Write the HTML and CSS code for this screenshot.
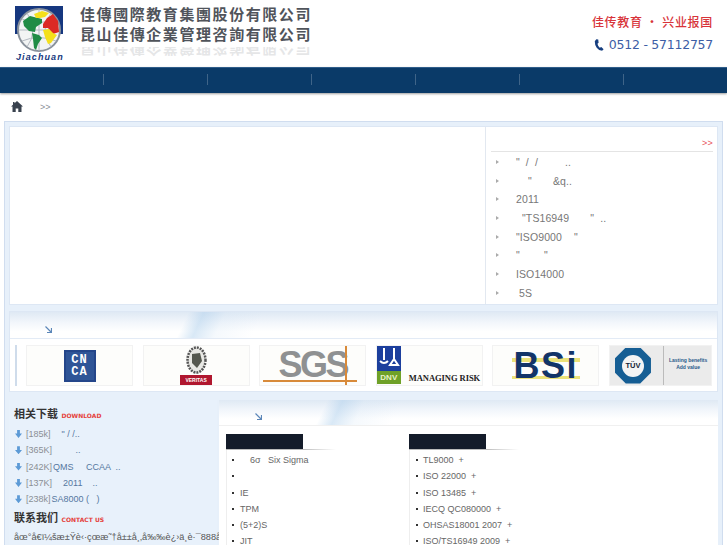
FILE: index.html
```html
<!DOCTYPE html>
<html lang="zh">
<head>
<meta charset="utf-8">
<title>佳傳國際教育集團</title>
<link rel="stylesheet" href="styles.css">
</head>
<body>
<header class="top">
  <svg class="logo" width="50" height="56" viewBox="0 0 50 56">
    <path d="M0 0H48V28H44A20 20 0 0 0 4 28H0Z" fill="#16377f"/>
    <circle cx="24" cy="24" r="21" fill="#f2f4f4" stroke="#8a929c" stroke-width="2"/>
    <path d="M4 24H44M24 3V45M12 7Q24 24 12 41M36 7Q24 24 36 41M7 13Q24 20 41 13M7 35Q24 28 41 35" fill="none" stroke="#b4bac2" stroke-width="1"/>
    <path d="M8 15L15 10L27 13L27 17L21 21L20 26L14 25L9 20Z" fill="#1f8c45"/>
    <path d="M19 8L27 5L34 7L30 11L25 12L21 12Z" fill="#f5e01c"/>
    <path d="M28 18L32 12L38 8L43 15L44 26L38 28L33 22L28 22Z" fill="#dc2a24"/>
    <path d="M28 24L34 23L38 27L42 29L36 37L33 38L30 31Z" fill="#f5e01c"/>
    <path d="M17 27L24 29L27 32L23 38L21 44L19 42L18 33Z" fill="#1f8c45"/>
    <text x="1" y="53.500" class="logo-word">Jiachuan</text>
  </svg>
  <div class="brand">
    <div class="brand-line">佳傳國際教育集團股份有限公司</div>
    <div class="brand-line">昆山佳傳企業管理咨詢有限公司</div>
    <div class="brand-mirror"><div class="brand-line">昆山佳傳企業管理咨詢有限公司</div></div>
  </div>
  <div class="contact">
    <div class="slogan">佳传教育 • 兴业报国</div>
    <div class="phone">
      <svg width="10" height="16" viewBox="0 0 13 16"><path d="M3 0.500L5.500 1L6 5L4.500 6.500Q5 9.500 7.500 11.500L9.500 10.500L12.500 13.500L10.500 15.500Q6.500 15.500 3.500 11.500Q1 8 1 3Z" fill="#173f80"/></svg>
      <span>0512 - 57112757</span>
    </div>
  </div>
</header>

<nav class="nav">
  <span class="nav-item"></span><span class="nav-item"></span><span class="nav-item"></span><span class="nav-item"></span><span class="nav-item"></span><span class="nav-item"></span>
</nav>

<div class="crumb">
  <svg width="12" height="11" viewBox="0 0 12 11"><path d="M6 0L12 5.500H10.500V11H7.300V7.500H4.700V11H1.500V5.500H0L2 3.700V1H3.500V2.300Z" fill="#39424e"/></svg>
  <span class="crumb-sep">&gt;&gt;</span>
</div>

<main class="shell">
  <section class="hero">
    <div class="hero-left"></div>
    <aside class="news">
      <div class="news-head"><span class="more">&gt;&gt;</span></div>
      <ul class="news-list">
        <li>"  /  /         ..</li>
        <li>    "       &amp;q..</li>
        <li>2011</li>
        <li>  "TS16949       "  ..</li>
        <li>"ISO9000    "</li>
        <li>"        "</li>
        <li>ISO14000</li>
        <li> 5S</li>
      </ul>
    </aside>
  </section>

  <section class="partners">
    <div class="band band-a"><svg class="band-arrow" width="7" height="7" viewBox="0 0 7 7"><path d="M0.500 0.500L6 6M6.500 2V6.500H2" fill="none" stroke="#5b86b8" stroke-width="1.200"/></svg></div>
    <div class="logos">
      <div class="cert">
        <div class="cnca"><span>CN</span><span>CA</span></div>
      </div>
      <div class="cert">
        <div class="bv">
          <svg width="21" height="28" viewBox="0 0 21 28"><ellipse cx="10.500" cy="14" rx="9" ry="12.500" fill="#e8e8e4" stroke="#555" stroke-width="2.500" stroke-dasharray="2 1"/><path d="M6 8L14 7L16 15L11 22L6 17Z" fill="#55584f"/></svg>
          <div class="bv-tag">VERITAS</div>
        </div>
      </div>
      <div class="cert sgs-box">
        <span class="sgs">SGS</span>
        <i class="sgs-h"></i><i class="sgs-v"></i>
      </div>
      <div class="cert dnv-box">
        <div class="dnv">
          <svg class="dnv-top" width="24" height="26" viewBox="0 0 24 26"><rect width="24" height="26" fill="#1c3f9d"/><path d="M7 3V15M3 16Q7 20 11 16M17 3V14L21 20H13L17 14" fill="none" stroke="#fff" stroke-width="2"/></svg>
          <div class="dnv-green">DNV</div>
        </div>
        <span class="risk">MANAGING RISK</span>
      </div>
      <div class="cert">
        <div class="bsi">BSi</div>
      </div>
      <div class="cert tuv-box">
        <div class="tuv"><span>TÜV</span></div>
        <div class="tuv-note">Lasting benefits<br>Add value</div>
      </div>
    </div>
  </section>

  <section class="lower">
    <aside class="side">
      <h3 class="side-title">相关下载 <span class="side-en">DOWNLOAD</span></h3>
      <ul class="files">
        <li><i class="dl"></i><span class="size">[185k]</span>    " / /..</li>
        <li><i class="dl"></i><span class="size">[365K]</span>         ..</li>
        <li><i class="dl"></i><span class="size">[242K]</span>QMS     CCAA  ..</li>
        <li><i class="dl"></i><span class="size">[137K]</span>    2011    ..</li>
        <li><i class="dl"></i><span class="size">[238k]</span>SA8000 (   )</li>
      </ul>
      <h3 class="side-title">联系我们 <span class="side-en">CONTACT US</span></h3>
      <p class="addr">åœ°å€ï¼šæ±Ÿè‹·çœæ˜†å±±å¸‚å‰‰è¿›ä¸­è·¯888å</p>
    </aside>
    <div class="courses">
      <div class="band band-b"><svg class="band-arrow" width="7" height="7" viewBox="0 0 7 7"><path d="M0.500 0.500L6 6M6.500 2V6.500H2" fill="none" stroke="#5b86b8" stroke-width="1.200"/></svg></div>
      <div class="course-cols">
        <div class="col">
          <div class="tab"></div>
          <ul class="course-list">
            <li>    6σ   Six Sigma</li>
            <li>&nbsp;</li>
            <li>IE</li>
            <li>TPM</li>
            <li>(5+2)S</li>
            <li>JIT</li>
          </ul>
        </div>
        <div class="col col-tight">
          <div class="tab"></div>
          <ul class="course-list">
            <li>TL9000  +</li>
            <li>ISO 22000  +</li>
            <li>ISO 13485  +</li>
            <li>IECQ QC080000  +</li>
            <li>OHSAS18001 2007  +</li>
            <li>ISO/TS16949 2009  +</li>
          </ul>
        </div>
      </div>
    </div>
  </section>
</main>
</body>
</html>
```

FILE: styles.css
```css
* { box-sizing: border-box; }
html, body { margin: 0; padding: 0; height: 545px; overflow: hidden; background: #fff; }
body { font-family: "Liberation Sans", Arial, sans-serif; font-size: 10px; color: #666; }
ul { list-style: none; margin: 0; padding: 0; }

/* header */
.top { height: 67px; display: flex; align-items: flex-start; padding: 6px 14px 0 15px; }
.logo { flex: none; display: block; }
.logo-word { font: italic bold 9px "Liberation Sans", sans-serif; letter-spacing: 1.100px; fill: #173a80; }
.brand { margin: -2px 0 0 15px; }
.brand-line { font: bold 15px/20px "Noto Sans CJK TC", sans-serif; letter-spacing: 1.570px; color: #50545b; white-space: nowrap; }
.brand-mirror { height: 12px; margin-top: 3px; overflow: hidden; opacity: .14; transform: scaleY(-1); display: flex; align-items: flex-start; }
.contact { margin-left: auto; padding-top: 7px; text-align: right; }
.slogan { font: 500 12px/18px "Noto Sans CJK SC", sans-serif; letter-spacing: .7px; color: #d8343a; }
.phone { display: flex; align-items: center; justify-content: flex-end; gap: 5px; margin-top: 5px; height: 18px; }
.phone span { font: 12.500px/18px "DejaVu Sans", sans-serif; letter-spacing: -.25px; color: #3d5ea6; }

/* nav */
.nav { height: 26px; display: flex; background: #0a3a68; border-top: 1px solid #2f5d8a; box-shadow: 0 1px 2px rgba(60,60,60,.5); }
.nav-item { width: 104px; position: relative; }
.nav-item::after { content: ""; display: block; width: 1px; height: 11px; margin: 6px 0 0 103px; background: #3f6488; }

/* breadcrumb */
.crumb { height: 28px; display: flex; align-items: center; padding: 0 0 1px 11px; gap: 17px; }
.crumb svg { display: block; }
.crumb-sep { font-size: 9px; color: #8a8f96; }

/* shell */
.shell { margin: 0 4px; padding: 4px; background: #e7f0fa; border: 1px solid #d0ddef; height: 430px; }

.hero { height: 179px; display: flex; background: #fff; border: 1px solid #dde7f4; }
.hero-left { flex: 1; }
.news { width: 232px; flex: none; border-left: 1px solid #e2e8f0; padding: 0 4px 0 5px; }
.news-head { height: 25px; border-bottom: 1px solid #e4e4e4; text-align: right; line-height: 32px; }
.more { font-size: 9px; color: #e8525a; letter-spacing: .3px; }
.news-list { padding-top: 1px; }
.news-list li { height: 18.670px; line-height: 18.670px; padding-left: 25px; font-size: 10.500px; letter-spacing: .1px; color: #777; white-space: pre; position: relative; }
.news-list li::before { content: ""; position: absolute; left: 5px; top: 7px; border-left: 3px solid #aaa; border-top: 2.500px solid transparent; border-bottom: 2.500px solid transparent; }

/* partners */
.partners { height: 81px; margin-top: 6px; background: #fff; border: 1px solid #dde7f4; }
.band { position: relative; background:
  linear-gradient(115deg, transparent 38%, rgba(170,205,235,.45) 43%, rgba(205,225,243,.2) 50%, transparent 62%),
  linear-gradient(#dfe9f4 0, #f2f6fb 40%, #fff 75%);
  border-bottom: 1px solid #e3ebf6; }
.band-a { height: 27px; background-size: 300px 100%, 100% 100%; background-repeat: no-repeat; background-position: 60px 0, 0 0; }
.band-b { height: 26px; border-bottom-color: #f0f0f0; background-size: 300px 100%, 100% 100%; background-repeat: no-repeat; background-position: -10px 0, 0 0; }
.band-arrow { position: absolute; left: 35px; top: 14px; }
.band-b .band-arrow { left: 36px; top: 13px; }
.logos { display: flex; align-items: flex-start; gap: 9.600px; padding: 6px 5px 0 16px; position: relative; }
.logos::before { content: ""; position: absolute; left: 5px; top: 6px; width: 2px; height: 41px; background: #cfdceb; }
.cert { width: 107px; height: 41px; flex: none; border: 1px solid #f2f2f2; background: #fdfdfb; display: flex; align-items: center; justify-content: center; position: relative; overflow: hidden; }

.cnca { width: 32px; height: 32px; background: #2f5597; border: 2px solid #24468a; display: flex; flex-direction: column; align-items: center; justify-content: center; }
.cnca span { font: bold 12px/12px "Liberation Mono", monospace; color: #fff; letter-spacing: 1px; }
.bv { display: flex; flex-direction: column; align-items: center; }
.bv svg { display: block; }
.bv-tag { width: 32px; height: 10px; background: #b0172f; font: bold 5px/10px "Liberation Sans", sans-serif; color: #fff; text-align: center; margin-top: 1px; }
.sgs { font: bold 36px/36px "Liberation Sans", sans-serif; letter-spacing: -2.500px; color: #8f9192; margin-top: -2px; }
.sgs-h { position: absolute; left: 3px; right: 8px; top: 34px; height: 1.500px; background: #d88a3a; }
.sgs-v { position: absolute; left: 85px; top: 0; bottom: 0; width: 1.500px; background: #d88a3a; }
.dnv-box { justify-content: flex-start; align-items: flex-end; }
.dnv { width: 24px; height: 40px; flex: none; }
.dnv-top { display: block; }
.dnv-green { height: 13px; background: #6fa128; font: bold 8px/13px "Liberation Sans", sans-serif; color: #e8f2c8; text-align: center; margin-top: 0; }
.risk { font: bold 8.500px/10px "Liberation Serif", serif; letter-spacing: -.05px; color: #222; margin: 0 0 2px 8px; white-space: nowrap; }
.bsi { font: bold 36px/33px "Liberation Sans", sans-serif; color: #123468; letter-spacing: 1.500px; background: linear-gradient(transparent 26%, #ece27a 26%, #ece27a 40%, transparent 40%, transparent 82%, #ece27a 82%, #ece27a 90%, transparent 90%); padding: 0 2px; }
.tuv-box { justify-content: flex-start; background: #ebebeb; padding-left: 5px; width: 103px; }
.tuv { width: 36px; height: 36px; flex: none; background: #165e94; clip-path: polygon(30% 0, 70% 0, 100% 30%, 100% 70%, 70% 100%, 30% 100%, 0 70%, 0 30%); display: flex; align-items: center; justify-content: center; }
.tuv span { width: 22px; height: 22px; border-radius: 50%; background: #f4f4f4; font: bold 7.500px/22px "Liberation Sans", sans-serif; color: #123; text-align: center; }
.tuv-note { margin-left: 12px; padding-left: 5px; border-left: 1px solid #bbb; height: 39px; font: bold 5px/7px "Liberation Sans", sans-serif; padding-top: 11px; text-align: center; color: #2a5a8a; white-space: nowrap; }

/* lower */
.lower { display: flex; gap: 2px; margin-top: 8px; }
.side { width: 208px; flex: none; height: 145px; background: #e8f1fb; padding: 5px 0 0 5px; }
.side-title { margin: 0; font: bold 11px/17px "Noto Sans CJK SC", sans-serif; color: #333; height: 18px; }
.side-en { font: bold 6px/17px "DejaVu Sans", sans-serif; color: #e5403a; margin-left: 1px; letter-spacing: 0; }
.files { margin: 3px 0 2px; }
.files li { height: 16.300px; line-height: 16.300px; padding-left: 12px; font-size: 9px; color: #55779f; white-space: pre; position: relative; }
.size { color: #8b8f95; margin-right: 1px; }
.dl { position: absolute; left: 1px; top: 4px; width: 7px; height: 8px; background: #5c9ad6; clip-path: polygon(30% 0, 70% 0, 70% 45%, 100% 45%, 50% 100%, 0 45%, 30% 45%); }
.addr { margin: 4px 0 0; font: 9.200px/12px "Liberation Sans", sans-serif; color: #555; white-space: nowrap; }

.courses { flex: 1; background: #fff; height: 145px; }
.course-cols { display: flex; padding: 8px 0 0 7px; }
.col { width: 183px; flex: none; }
.tab { width: 110px; height: 16px; background: linear-gradient(to right, #bbb 70%, #fff) left bottom / 100% 1px no-repeat; }
.tab::before { content: ""; display: block; width: 77px; height: 15px; background: #141c2a; }
.course-list { padding: 2px 0 0 13px; border-left: 1px solid #eee; }
.course-list li { height: 16.300px; line-height: 16.300px; font-size: 9px; color: #666; white-space: pre; position: relative; }
.course-list li::before { content: ""; position: absolute; left: -8px; top: 7px; width: 2px; height: 2px; background: #333; }
.col-tight .course-list { padding-left: 13px; }
.col-tight .course-list li::before { left: -7px; }
```
